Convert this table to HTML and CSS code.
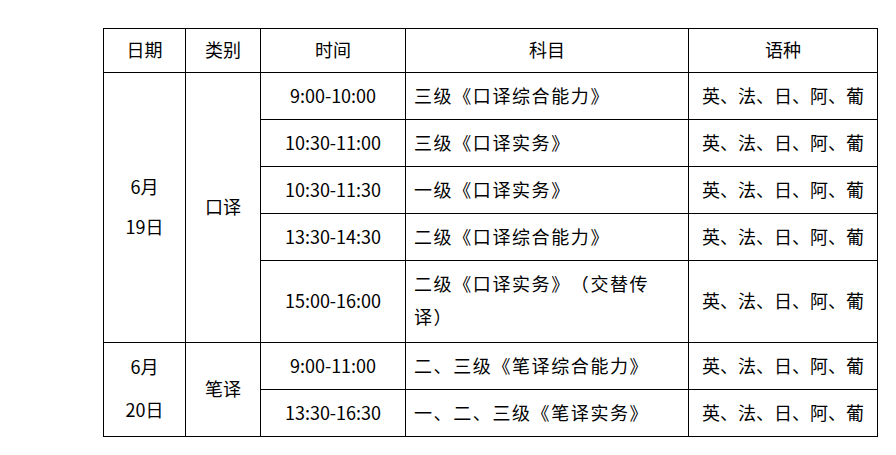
FILE: index.html
```html
<!DOCTYPE html>
<html lang="zh">
<head>
<meta charset="utf-8">
<link rel="stylesheet" href="styles.css">
</head>
<body>
<div class="page">
<table class="schedule">
  <colgroup>
    <col class="c-date">
    <col class="c-type">
    <col class="c-time">
    <col class="c-subject">
    <col class="c-lang">
  </colgroup>
  <thead>
    <tr class="head-row">
      <th>日期</th>
      <th>类别</th>
      <th>时间</th>
      <th>科目</th>
      <th>语种</th>
    </tr>
  </thead>
  <tbody>
    <tr class="row">
      <td rowspan="5" class="date"><div class="date-l1">6月</div><div class="date-l1">19日</div></td>
      <td rowspan="5">口译</td>
      <td>9:00-10:00</td>
      <td class="subject">三级《口译综合能力》</td>
      <td>英、法、日、阿、葡</td>
    </tr>
    <tr class="row">
      <td>10:30-11:00</td>
      <td class="subject">三级《口译实务》</td>
      <td>英、法、日、阿、葡</td>
    </tr>
    <tr class="row">
      <td>10:30-11:30</td>
      <td class="subject">一级《口译实务》</td>
      <td>英、法、日、阿、葡</td>
    </tr>
    <tr class="row">
      <td>13:30-14:30</td>
      <td class="subject">二级《口译综合能力》</td>
      <td>英、法、日、阿、葡</td>
    </tr>
    <tr class="row-tall">
      <td>15:00-16:00</td>
      <td class="subject wrap">二级《口译实务》（交替传<br>译）</td>
      <td>英、法、日、阿、葡</td>
    </tr>
    <tr class="row">
      <td rowspan="2" class="date"><div class="date-l2">6月</div><div class="date-l2">20日</div></td>
      <td rowspan="2">笔译</td>
      <td>9:00-11:00</td>
      <td class="subject">二、三级《笔译综合能力》</td>
      <td>英、法、日、阿、葡</td>
    </tr>
    <tr class="row">
      <td>13:30-16:30</td>
      <td class="subject">一、二、三级《笔译实务》</td>
      <td>英、法、日、阿、葡</td>
    </tr>
  </tbody>
</table>
</div>
</body>
</html>
```

FILE: styles.css
```css
html, body {
  margin: 0;
  padding: 0;
  background: #fff;
}

.page {
  padding: 28px 0 0 103px;
}

.schedule {
  border-collapse: collapse;
  table-layout: fixed;
  width: 775px;
  font-family: "Microsoft YaHei", "Noto Sans CJK SC", "Noto Sans", sans-serif;
  font-size: 18px;
  color: #000;
  text-spacing-trim: space-all;
}

.c-date { width: 82px; }
.c-type { width: 75px; }
.c-time { width: 145px; }
.c-subject { width: 283px; }
.c-lang { width: 189px; }

.schedule th,
.schedule td {
  border: 1px solid #000;
  text-align: center;
  vertical-align: middle;
  font-weight: normal;
  padding: 0 8px 3px;
  line-height: 24px;
  white-space: nowrap;
}

.head-row th {
  height: 40px;
}

.row td {
  height: 43px;
}

.row-tall td {
  height: 78px;
}

.schedule td.subject {
  text-align: left;
  padding-left: 8px;
  letter-spacing: 1.6px;
}

.schedule td.wrap {
  line-height: 33px;
}

.date-l1 {
  line-height: 40px;
}

.date-l2 {
  line-height: 43px;
}
```
